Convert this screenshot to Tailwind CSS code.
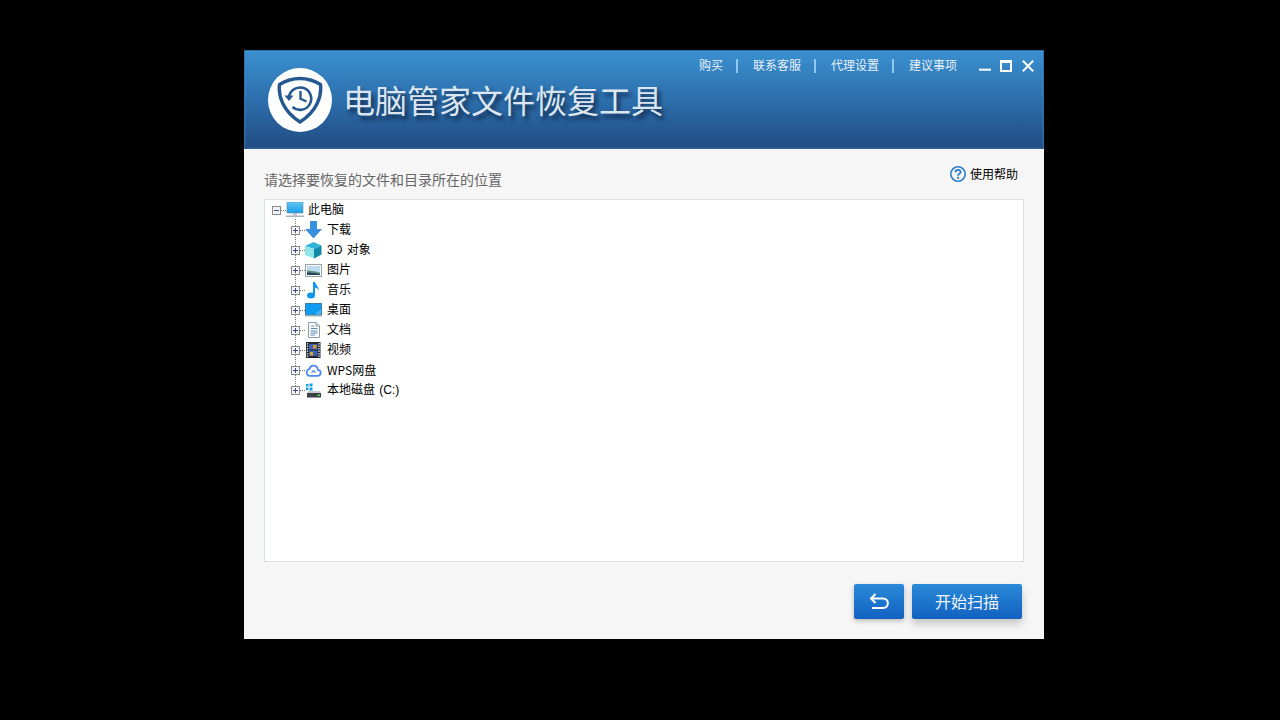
<!DOCTYPE html>
<html lang="zh-CN"><head><meta charset="utf-8">
<script src="https://cdn.jsdelivr.net/npm/@tailwindcss/browser@4"></script>
</head>
<body class="bg-black h-[720px] overflow-hidden font-['Liberation_Sans','Noto_Sans_CJK_SC',sans-serif]">
<div class="pt-[50px] pl-[244px]">
<div class="w-[800px] h-[589px] flex flex-col bg-[#f6f6f6]">
  <header class="h-[99px] shrink-0 border border-[#2b6ea6] border-b-[#2f5f92] shadow-[inset_0_0_0_1px_rgba(120,180,225,0.12)] bg-gradient-to-b from-[#3a90cf] via-[#2d6fad] via-50% to-[#214c82] relative flex items-start pl-[23px] pt-[17px]">
    <div class="w-16 h-16 rounded-full bg-white flex items-center justify-center shrink-0">
      <svg width="46" height="48" viewBox="0 0 46 48" fill="none" stroke="#24598f">
        <path d="M23 2.500C30 2.500 37 4.500 43.500 8.500C45 20 40 35 23 46C6 35 1 20 2.500 8.500C9 4.500 16 2.500 23 2.500Z" stroke-width="3.400" stroke-linejoin="round"/>
        <path d="M11.800 22.500A11.200 11.200 0 1 1 15.500 31" stroke-width="2.600"/>
        <path d="M7.500 19.500L12 25L16.500 19.500Z" fill="#24598f" stroke="none"/>
        <path d="M23.500 15V22.800L29.500 25.500" stroke-width="2.400"/>
      </svg>
    </div>
    <h1 class="ml-[11px] mt-[11px] text-[32px] leading-[40px] text-[#dbe6f1] [text-shadow:3px_4px_4px_rgba(10,30,60,0.85)] whitespace-nowrap font-['Noto_Sans_CJK_SC',sans-serif]">电脑管家文件恢复工具</h1>
    <nav class="absolute top-[6px] right-[86px] flex items-center text-[12px] leading-[18px] text-[#e9f1f8] whitespace-nowrap">
      <a>购买</a><i class="w-[2px] h-[14px] bg-[#8fc8ec] ml-[13px] mr-[15px]"></i>
      <a>联系客服</a><i class="w-[2px] h-[14px] bg-[#8fc8ec] ml-[13px] mr-[15px]"></i>
      <a>代理设置</a><i class="w-[2px] h-[14px] bg-[#8fc8ec] ml-[13px] mr-[15px]"></i>
      <a>建议事项</a>
    </nav>
    <div class="absolute top-[9px] right-[9px] flex items-center">
      <svg width="12" height="12" viewBox="0 0 12 12"><rect y="8.700" width="12" height="2" fill="#fff"/></svg>
      <svg class="ml-[9px]" width="12" height="12" viewBox="0 0 12 12" fill="none"><path d="M0 0H12V12H0ZM2 3V10H10V3Z" fill="#fff" fill-rule="evenodd"/></svg>
      <svg class="ml-[10px]" width="12" height="12" viewBox="0 0 12 12" stroke="#fff" stroke-width="2"><path d="M.8.800L11.200 11.200M11.200.800L.8 11.200"/></svg>
    </div>
  </header>
  <main class="flex-1 px-5 flex flex-col">
    <div class="h-[50px] shrink-0 flex justify-between pr-[6px]">
      <p class="pt-[20px] text-[14px] leading-[22px] text-[#666] whitespace-nowrap">请选择要恢复的文件和目录所在的位置</p>
      <div class="pt-[16px] flex items-start gap-1 text-[12px] leading-[18px] text-black">
        <svg width="16" height="18" viewBox="0 0 16 16" fill="none"><circle cx="8" cy="8" r="7.200" stroke="#2b7ccd" stroke-width="1.600"/><path d="M5.400 6.300C5.500 3.200 10.700 3.200 10.700 6.100C10.700 7.900 8 7.800 8 9.800" stroke="#2b7ccd" stroke-width="1.800"/><rect x="7" y="10.800" width="2" height="2" fill="#2b7ccd"/></svg>
        <span class="pt-px">使用帮助</span>
      </div>
    </div>
    <section class="relative h-[363px] shrink-0 w-[760px] bg-white border border-[#d9dfe6] text-[12px] text-black [word-spacing:1px]">
      <span class="absolute left-[30px] top-[19px] h-[171px] border-l border-dotted border-[#777]"></span>
      <div class="h-5 flex items-center pl-[7px] relative">
        <span class="w-[9px] h-[9px] border border-[#8a8a8a] bg-[#f4f4f4] flex items-center justify-center"><i class="w-[5px] h-px bg-[#3a4f8a]"></i></span>
        <i class="w-[5px] border-t border-dotted border-[#777]"></i>
        <svg width="18" height="16" viewBox="0 0 18 16" class="mr-[4px]"><defs><linearGradient id="m" x1="0" y1="0" x2="0" y2="1"><stop offset="0" stop-color="#5fc8f5"/><stop offset="1" stop-color="#1b9be6"/></linearGradient></defs><rect x="1" y="0" width="16" height="11" fill="url(#m)" stroke="#5b8fb2" stroke-width=".6"/><rect x="7" y="11" width="4" height="2.500" fill="#b8c4cc"/><rect x="0" y="13.500" width="18" height="1.500" fill="#a5b4bf"/></svg>
        <span class="leading-5">此电脑</span>
      </div>

      <div class="h-5 flex items-center pl-[26px]">
        <span class="w-[9px] h-[9px] border border-[#8a8a8a] bg-[#f4f4f4] relative flex items-center justify-center"><i class="w-[5px] h-px bg-[#3a4f8a]"></i><i class="absolute w-px h-[5px] bg-[#3a4f8a]"></i></span>
        <i class="w-[5px] border-t border-dotted border-[#777]"></i>
        <svg class="mr-[5px]" width="17" height="18" viewBox="0 0 17 18"><path d="M5 0H12V8H17L8.500 17.500L0 8H5Z" fill="#3b8fdf"/></svg>
        <span class="leading-5">下载</span>
      </div>

      <div class="h-5 flex items-center pl-[26px]">
        <span class="w-[9px] h-[9px] border border-[#8a8a8a] bg-[#f4f4f4] relative flex items-center justify-center"><i class="w-[5px] h-px bg-[#3a4f8a]"></i><i class="absolute w-px h-[5px] bg-[#3a4f8a]"></i></span>
        <i class="w-[5px] border-t border-dotted border-[#777]"></i>
        <svg class="mr-[5px]" width="17" height="17" viewBox="0 0 17 17"><path d="M0 4L8.500 0L16.500 3.500L9 7Z" fill="#2fb6d8"/><path d="M0 4L9 7V16.500L0 13Z" fill="#8fe6ea"/><path d="M9 7L16.500 3.500V12.500L9 16.500Z" fill="#1488a8"/></svg>
        <span class="leading-5">3D 对象</span>
      </div>

      <div class="h-5 flex items-center pl-[26px]">
        <span class="w-[9px] h-[9px] border border-[#8a8a8a] bg-[#f4f4f4] relative flex items-center justify-center"><i class="w-[5px] h-px bg-[#3a4f8a]"></i><i class="absolute w-px h-[5px] bg-[#3a4f8a]"></i></span>
        <i class="w-[5px] border-t border-dotted border-[#777]"></i>
        <svg class="mr-[5px]" width="17" height="13" viewBox="0 0 17 13"><rect x=".5" y=".5" width="16" height="12" fill="#f6f8fa" stroke="#9aa3aa"/><rect x="2" y="2" width="13" height="9" fill="#bcdcf2"/><path d="M2 6.500L8 7L15 8.500V11H2Z" fill="#5f8f78"/><path d="M2 8.500L9 9L15 10V11H2Z" fill="#24425f"/></svg>
        <span class="leading-5">图片</span>
      </div>

      <div class="h-5 flex items-center pl-[26px]">
        <span class="w-[9px] h-[9px] border border-[#8a8a8a] bg-[#f4f4f4] relative flex items-center justify-center"><i class="w-[5px] h-px bg-[#3a4f8a]"></i><i class="absolute w-px h-[5px] bg-[#3a4f8a]"></i></span>
        <i class="w-[5px] border-t border-dotted border-[#777]"></i>
        <svg class="mr-[5px]" width="17" height="18" viewBox="0 0 17 18"><ellipse cx="6" cy="14.500" rx="4" ry="3" fill="#0e96ea"/><path d="M8 14V1H10C10.500 4 14 5 13.500 10C13 7.500 11.500 7 10 6.500V14Z" fill="#0e96ea"/></svg>
        <span class="leading-5">音乐</span>
      </div>

      <div class="h-5 flex items-center pl-[26px]">
        <span class="w-[9px] h-[9px] border border-[#8a8a8a] bg-[#f4f4f4] relative flex items-center justify-center"><i class="w-[5px] h-px bg-[#3a4f8a]"></i><i class="absolute w-px h-[5px] bg-[#3a4f8a]"></i></span>
        <i class="w-[5px] border-t border-dotted border-[#777]"></i>
        <svg class="mr-[5px]" width="17" height="14" viewBox="0 0 17 14"><rect x=".5" y=".5" width="16" height="11.500" fill="#0f9bf0" stroke="#3b7fa8"/><path d="M10 11.500L16 6V11.500Z" fill="#4bb6f5"/><rect x="0" y="12" width="17" height="1.500" fill="#9eb1bd"/></svg>
        <span class="leading-5">桌面</span>
      </div>

      <div class="h-5 flex items-center pl-[26px]">
        <span class="w-[9px] h-[9px] border border-[#8a8a8a] bg-[#f4f4f4] relative flex items-center justify-center"><i class="w-[5px] h-px bg-[#3a4f8a]"></i><i class="absolute w-px h-[5px] bg-[#3a4f8a]"></i></span>
        <i class="w-[5px] border-t border-dotted border-[#777]"></i>
        <svg class="mr-[5px]" width="17" height="16" viewBox="0 0 17 16" fill="none"><path d="M3.500.5H11L14.500 4V15.500H3.500Z" fill="#fbfcfd" stroke="#8f9aa3"/><path d="M11 .5V4H14.500" stroke="#8f9aa3"/><path d="M6 4H9M6 6.500H12.500M5.500 9H12.500M5.500 11H12.500M5.500 13H10" stroke="#5a88b8"/></svg>
        <span class="leading-5">文档</span>
      </div>

      <div class="h-5 flex items-center pl-[26px]">
        <span class="w-[9px] h-[9px] border border-[#8a8a8a] bg-[#f4f4f4] relative flex items-center justify-center"><i class="w-[5px] h-px bg-[#3a4f8a]"></i><i class="absolute w-px h-[5px] bg-[#3a4f8a]"></i></span>
        <i class="w-[5px] border-t border-dotted border-[#777]"></i>
        <svg class="mr-[5px]" width="17" height="16" viewBox="0 0 17 16"><rect x="1" y="0" width="14.500" height="16" fill="#23262b"/><path d="M2.500 1V15M14 1V15" stroke="#c8d2da" stroke-width="1.400" stroke-dasharray="1.500 1"/><rect x="4" y="2" width="8.500" height="5.500" fill="#3a63b8"/><rect x="4" y="8.500" width="8.500" height="5.500" fill="#3a63b8"/><rect x="8" y="3" width="3.500" height="3.500" fill="#d89a2a"/><rect x="5" y="10" width="3" height="3.500" fill="#d8a82a"/></svg>
        <span class="leading-5">视频</span>
      </div>

      <div class="h-5 flex items-center pl-[26px]">
        <span class="w-[9px] h-[9px] border border-[#8a8a8a] bg-[#f4f4f4] relative flex items-center justify-center"><i class="w-[5px] h-px bg-[#3a4f8a]"></i><i class="absolute w-px h-[5px] bg-[#3a4f8a]"></i></span>
        <i class="w-[5px] border-t border-dotted border-[#777]"></i>
        <svg class="mr-[5px]" width="17" height="13" viewBox="0 0 17 13" fill="none"><path d="M5 11.800H12.500C16.500 11.800 16.800 6.500 13 6.200C12.500 .5 5.500 0 4.500 5C1 5.500 .3 11.800 5 11.800Z" stroke="#4a86ee" stroke-width="1.700"/><path d="M6.500 8.500L8.500 6.500L10.500 8.500" stroke="#4a86ee" stroke-width="1.200"/></svg>
        <span class="leading-5 -mt-px font-['Noto_Sans_CJK_SC',sans-serif]">WPS网盘</span>
      </div>

      <div class="h-5 flex items-center pl-[26px]">
        <span class="w-[9px] h-[9px] border border-[#8a8a8a] bg-[#f4f4f4] relative flex items-center justify-center"><i class="w-[5px] h-px bg-[#3a4f8a]"></i><i class="absolute w-px h-[5px] bg-[#3a4f8a]"></i></span>
        <i class="w-[5px] border-t border-dotted border-[#777]"></i>
        <svg class="mr-[5px]" width="17" height="15" viewBox="0 0 17 15"><path d="M1 1H3.500V3.500H1ZM4.500 .5H7.500V3.500H4.500ZM1 4.500H3.500V7H1ZM4.500 4.500H7.500V7.500H4.500Z" fill="#16a1e6"/><path d="M3.500 8H14.500L16 10H2Z" fill="#c5cbd0"/><rect x="2" y="10" width="14" height="4.500" fill="#3a3f44"/><rect x="12.500" y="11.500" width="2.500" height="1.500" fill="#5fd35f"/></svg>
        <span class="leading-5">本地磁盘 (C:)</span>
      </div>
    </section>
    <div class="flex justify-end gap-2 pt-[22px] pr-[2px]">
      <button class="w-[50px] h-[35px] rounded-[2px] bg-gradient-to-b from-[#2b8ad8] to-[#1261c0] shadow-[0_2px_5px_rgba(0,0,0,0.25)] flex items-center justify-center">
        <svg width="20" height="17" viewBox="0 0 20 17" fill="none" stroke="#fff" stroke-width="2"><path d="M6.500 1L2 5.500L6.500 10"/><path d="M2 5.500H14C20.500 5.500 20.500 15 14 15H3"/></svg>
      </button>
      <button class="w-[110px] h-[35px] pt-[2px] rounded-[2px] bg-gradient-to-b from-[#2b8ad8] to-[#1261c0] shadow-[0_5px_8px_rgba(0,0,0,0.2)] text-[16px] text-[#eef5fb]">开始扫描</button>
    </div>
  </main>
</div>
</div>
</body></html>
